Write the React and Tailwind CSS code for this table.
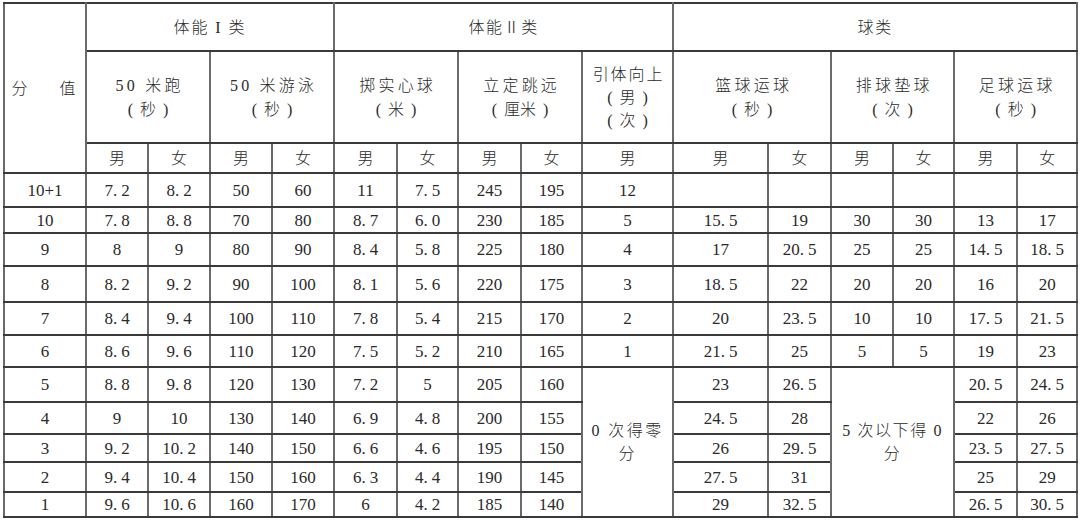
import React from 'react';

const widths = [82, 62, 62, 62, 62, 63, 61, 63, 61, 91, 95, 63, 62, 61, 63, 60];
const rowHeights = [34, 26, 33, 36, 33, 32, 35, 32, 28, 30, 23];

// 分值, 50米跑 男/女, 50米游泳 男/女, 掷实心球 男/女, 立定跳远 男/女, 引体向上, 篮球 男/女, 排球 男/女, 足球 男/女
const rows = [
  ['10+1', '7.2', '8.2', '50', '60', '11', '7.5', '245', '195', '12', '', '', '', '', '', ''],
  ['10', '7.8', '8.8', '70', '80', '8.7', '6.0', '230', '185', '5', '15.5', '19', '30', '30', '13', '17'],
  ['9', '8', '9', '80', '90', '8.4', '5.8', '225', '180', '4', '17', '20.5', '25', '25', '14.5', '18.5'],
  ['8', '8.2', '9.2', '90', '100', '8.1', '5.6', '220', '175', '3', '18.5', '22', '20', '20', '16', '20'],
  ['7', '8.4', '9.4', '100', '110', '7.8', '5.4', '215', '170', '2', '20', '23.5', '10', '10', '17.5', '21.5'],
  ['6', '8.6', '9.6', '110', '120', '7.5', '5.2', '210', '165', '1', '21.5', '25', '5', '5', '19', '23'],
  ['5', '8.8', '9.8', '120', '130', '7.2', '5', '205', '160', null, '23', '26.5', null, null, '20.5', '24.5'],
  ['4', '9', '10', '130', '140', '6.9', '4.8', '200', '155', null, '24.5', '28', null, null, '22', '26'],
  ['3', '9.2', '10.2', '140', '150', '6.6', '4.6', '195', '150', null, '26', '29.5', null, null, '23.5', '27.5'],
  ['2', '9.4', '10.4', '150', '160', '6.3', '4.4', '190', '145', null, '27.5', '31', null, null, '25', '29'],
  ['1', '9.6', '10.6', '160', '170', '6', '4.2', '185', '140', null, '29', '32.5', null, null, '26.5', '30.5'],
];

const cell = 'border-2 border-y-[#3a3a3a] border-x-[#6a6a6a] text-center align-middle p-0';

function Num({ v }) {
  // 小数点后留出一点空隙，接近原表的字距
  const parts = v.split('.');
  if (parts.length === 1) return <span>{v}</span>;
  return (
    <span>
      {parts[0]}.<span className="ml-[4px]">{parts[1]}</span>
    </span>
  );
}

// 全角括号在浏览器里会被挤紧，这里用半角括号加间距代替
function Unit({ children }) {
  return (
    <div>
      (<span className="mx-[7px]">{children}</span>)
    </div>
  );
}

function Head({ title, unit }) {
  return (
    <>
      <div className="tracking-[0.2em] pl-[0.2em] mb-[1px]">{title}</div>
      <Unit>{unit}</Unit>
    </>
  );
}

export default function App() {
  return (
    <div className="bg-white w-[1080px] h-[520px] overflow-hidden pt-[2px] pl-[3px]">
      <table
        className="table-fixed border-collapse text-[#2a2a2a] text-[16px] leading-[23px]"
        style={{ fontFamily: '"Liberation Serif", "Noto Sans CJK SC", serif', width: 1074 }}
      >
        <colgroup>
          {widths.map((w, i) => (
            <col key={i} style={{ width: w }} />
          ))}
        </colgroup>
        <thead className="font-light">
          <tr className="h-[48px]">
            <td rowSpan={3} className={cell}>
              <span className="tracking-[0.2em]">分&nbsp;&nbsp;&nbsp;&nbsp;值</span>
            </td>
            <td colSpan={4} className={cell}>
              <span className="tracking-[0.12em]">体能 I 类</span>
            </td>
            <td colSpan={5} className={cell}>
              <span className="tracking-[0.1em]">体能Ⅱ类</span>
            </td>
            <td colSpan={6} className={cell}>
              <span className="tracking-[0.1em]">球类</span>
            </td>
          </tr>
          <tr className="h-[92px]">
            <td colSpan={2} className={cell}>
              <Head title="50 米跑" unit="秒" />
            </td>
            <td colSpan={2} className={cell}>
              <Head title="50 米游泳" unit="秒" />
            </td>
            <td colSpan={2} className={cell}>
              <Head title="掷实心球" unit="米" />
            </td>
            <td colSpan={2} className={cell}>
              <Head title="立定跳远" unit="厘米" />
            </td>
            <td className={cell}>
              <div className="tracking-[0.12em] pl-[0.12em]">引体向上</div>
              <Unit>男</Unit>
              <Unit>次</Unit>
            </td>
            <td colSpan={2} className={cell}>
              <Head title="篮球运球" unit="秒" />
            </td>
            <td colSpan={2} className={cell}>
              <Head title="排球垫球" unit="次" />
            </td>
            <td colSpan={2} className={cell}>
              <Head title="足球运球" unit="秒" />
            </td>
          </tr>
          <tr className="h-[30px]">
            {['男', '女', '男', '女', '男', '女', '男', '女', '男', '男', '女', '男', '女', '男', '女'].map((t, i) => (
              <td key={i} className={cell}>
                {t}
              </td>
            ))}
          </tr>
        </thead>
        <tbody className="text-[17px]">
          {rows.map((r, ri) => (
            <tr key={ri} style={{ height: rowHeights[ri] }}>
              {r.map((v, ci) => {
                if (v === null) {
                  if (ri === 6 && ci === 9) {
                    return (
                      <td key={ci} rowSpan={5} className={cell + ' text-[16px] font-light px-2'}>
                        <span className="tracking-[0.15em]">0 次得零分</span>
                      </td>
                    );
                  }
                  if (ri === 6 && ci === 12) {
                    return (
                      <td key={ci} rowSpan={5} colSpan={2} className={cell + ' text-[16px] font-light px-1'}>
                        <span className="tracking-[0.1em]">5 次以下得 0 分</span>
                      </td>
                    );
                  }
                  return null;
                }
                return (
                  <td key={ci} className={cell}>
                    <Num v={v} />
                  </td>
                );
              })}
            </tr>
          ))}
        </tbody>
      </table>
    </div>
  );
}
